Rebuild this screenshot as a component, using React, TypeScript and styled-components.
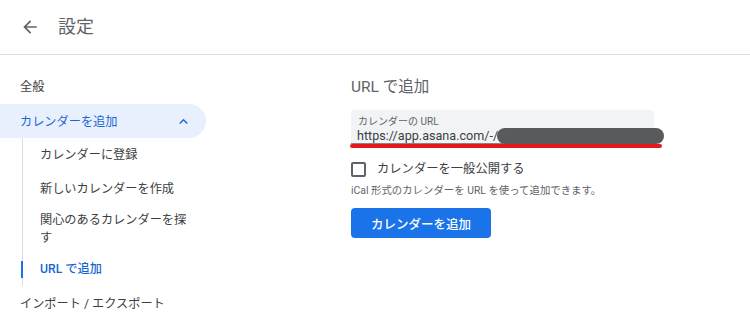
import React from 'react';
import styled, { createGlobalStyle } from 'styled-components';

const GlobalStyle = createGlobalStyle`
  html, body {
    margin: 0;
    padding: 0;
    background: #ffffff;
  }
  body {
    font-family: Roboto, "Noto Sans CJK JP", "Noto Sans", sans-serif;
    color: #3c4043;
    -webkit-font-smoothing: antialiased;
  }
`;

const Page = styled.div`
  width: 750px;
  height: 317px;
  overflow: hidden;
  display: flex;
  flex-direction: column;
`;

const Header = styled.header`
  height: 54px;
  flex: none;
  display: flex;
  align-items: center;
  gap: 18px;
  padding-left: 20px;
  border-bottom: 1px solid #dadce0;
`;

const BackButton = styled.button`
  width: 20px;
  height: 20px;
  padding: 0;
  border: none;
  background: none;
  color: #5f6368;
  display: flex;
  align-items: center;
  justify-content: center;
  cursor: pointer;
`;

const Title = styled.h1`
  margin: 0;
  font-size: 18px;
  font-weight: 400;
  color: #5f6368;
  line-height: 24px;
`;

const Body = styled.div`
  flex: 1;
  display: flex;
`;

const Sidebar = styled.nav`
  width: 206px;
  flex: none;
  padding-top: 14px;
  display: flex;
  flex-direction: column;
`;

const NavItem = styled.div<{ $active?: boolean }>`
  height: 34px;
  display: flex;
  align-items: center;
  justify-content: space-between;
  padding: 0 14px 0 20px;
  font-size: 12.2px;
  color: ${p => (p.$active ? '#1967d2' : '#3c4043')};
  background: ${p => (p.$active ? '#e8f0fe' : 'transparent')};
  border-radius: 0 17px 17px 0;
  margin-top: ${p => (p.$active ? '1px' : '0')};
`;

const SubList = styled.div`
  margin-left: 22px;
  border-left: 1px solid #dadce0;
  display: flex;
  flex-direction: column;
`;

const SubItem = styled.div<{ $active?: boolean; $multi?: boolean }>`
  position: relative;
  padding: ${p => (p.$multi ? '5px' : '8px')} 16px ${p => (p.$multi ? '5px' : '8px')} 17px;
  font-size: 12.2px;
  line-height: 18px;
  color: ${p => (p.$active ? '#1967d2' : '#3c4043')};
  font-weight: ${p => (p.$active ? 500 : 400)};

  &::before {
    content: '';
    display: ${p => (p.$active ? 'block' : 'none')};
    position: absolute;
    left: -2px;
    top: 9px;
    bottom: 8px;
    width: 2px;
    background: #1a73e8;
  }
`;

const Main = styled.main`
  flex: 1;
  padding: 20px 0 0 145px;
  display: flex;
  flex-direction: column;
  align-items: flex-start;
`;

const SectionTitle = styled.h2`
  margin: 0;
  font-size: 15.5px;
  font-weight: 400;
  line-height: 24px;
  color: #5f6368;
`;

const Field = styled.div`
  position: relative;
  margin-top: 11px;
  width: 303px;
  height: 34px;
  box-sizing: border-box;
  padding: 5px 8px 0 7px;
  background: #f1f3f4;
  border-radius: 4px 4px 0 0;
  border-bottom: 1px solid #80868b;
`;

const FieldLabel = styled.div`
  font-size: 10px;
  line-height: 13px;
  color: #5f6368;
`;

const FieldValue = styled.div`
  font-size: 12.6px;
  line-height: 16px;
  color: #3c4043;
  margin-left: -1px;
  white-space: nowrap;
`;

const Redaction = styled.div`
  position: absolute;
  left: 146px;
  top: 18px;
  width: 167px;
  height: 16px;
  border-radius: 8px;
  background: #595a5c;
`;

const RedMark = styled.div`
  position: absolute;
  left: -1px;
  top: 34px;
  width: 312px;
  height: 4px;
  border-radius: 2px;
  background: #e4191c;
`;

const CheckRow = styled.label`
  margin-top: 16px;
  display: flex;
  align-items: center;
  gap: 11px;
  font-size: 12.3px;
  color: #3c4043;
  line-height: 18px;
`;

const CheckBox = styled.span`
  width: 15px;
  height: 15px;
  box-sizing: border-box;
  border: 2px solid #5f6368;
  border-radius: 2px;
`;

const Hint = styled.div`
  margin-top: 6px;
  font-size: 10.4px;
  line-height: 14px;
  color: #5f6368;
`;

const PrimaryButton = styled.button`
  margin-top: 10px;
  width: 140px;
  height: 30px;
  border: none;
  border-radius: 4px;
  background: #1a73e8;
  color: #ffffff;
  font-family: Roboto, "Noto Sans CJK JP", sans-serif;
  font-size: 12.5px;
  font-weight: 500;
  cursor: pointer;
`;

const ArrowBack = () => (
  <svg width="20" height="20" viewBox="0 0 24 24" fill="currentColor">
    <path d="M20 11H7.83l5.59-5.59L12 4l-8 8 8 8 1.41-1.41L7.83 13H20v-2z" />
  </svg>
);

const ChevronUp = () => (
  <svg width="17" height="17" viewBox="0 0 24 24" fill="currentColor">
    <path d="M12 8l-6 6 1.41 1.41L12 10.83l4.59 4.58L18 14z" />
  </svg>
);

export default function App() {
  return (
    <>
      <GlobalStyle />
      <Page>
        <Header>
          <BackButton aria-label="戻る">
            <ArrowBack />
          </BackButton>
          <Title>設定</Title>
        </Header>
        <Body>
          <Sidebar>
            <NavItem>全般</NavItem>
            <NavItem $active>
              カレンダーを追加
              <ChevronUp />
            </NavItem>
            <SubList>
              <SubItem>カレンダーに登録</SubItem>
              <SubItem>新しいカレンダーを作成</SubItem>
              <SubItem $multi>関心のあるカレンダーを探す</SubItem>
              <SubItem $active>URL で追加</SubItem>
            </SubList>
            <NavItem>インポート / エクスポート</NavItem>
          </Sidebar>
          <Main>
            <SectionTitle>URL で追加</SectionTitle>
            <Field>
              <FieldLabel>カレンダーの URL</FieldLabel>
              <FieldValue>https://app.asana.com/-/0</FieldValue>
              <Redaction />
              <RedMark />
            </Field>
            <CheckRow>
              <CheckBox />
              カレンダーを一般公開する
            </CheckRow>
            <Hint>iCal 形式のカレンダーを URL を使って追加できます。</Hint>
            <PrimaryButton>カレンダーを追加</PrimaryButton>
          </Main>
        </Body>
      </Page>
    </>
  );
}
